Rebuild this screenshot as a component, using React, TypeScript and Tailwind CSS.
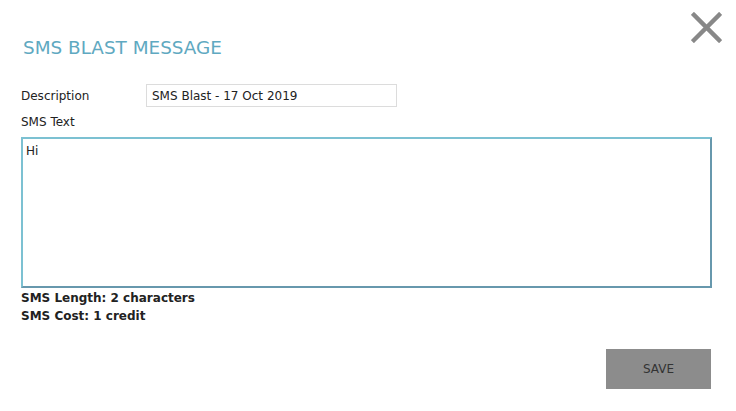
export default function App() {
  return (
    <div
      className="relative h-[411px] w-[736px] bg-white text-[12px] text-[#222]"
      style={{ fontFamily: '"DejaVu Sans", Verdana, sans-serif' }}
    >
      {/* close */}
      <button className="absolute right-[14px] top-[12px] h-[31px] w-[31px]" aria-label="Close">
        <svg viewBox="0 0 32 32" className="h-full w-full">
          <path d="M3 3 L29 29 M29 3 L3 29" stroke="#888" strokeWidth="4.5" strokeLinecap="square" />
        </svg>
      </button>

      <div className="flex flex-col px-[21px] pt-[38px]">
        <h1 className="pl-[2px] text-[18.4px] leading-[20px] text-[#5fa9c1]">SMS BLAST MESSAGE</h1>

        <div className="mt-[26px] flex items-center">
          <label className="w-[125px] leading-[22px]">Description</label>
          <div className="flex h-[23px] w-[251px] items-center border border-[#dcdcdc] px-[5px]">
            SMS Blast - 17 Oct 2019
          </div>
        </div>

        <div className="mt-[7px] leading-[16px]">SMS Text</div>

        <div className="mt-[7px] h-[151px] w-[691px] border-2 border-t-[#7cc1d2] border-l-[#7cc1d2] border-b-[#6798ad] border-r-[#6798ad] px-[3px] pt-[3px]">
          Hi
        </div>

        <div className="mt-[1px] font-bold leading-[18px]">SMS Length: 2 characters</div>
        <div className="font-bold leading-[18px]">SMS Cost: 1 credit</div>

        <div className="mt-[24px] flex justify-end pr-[4px]">
          <button className="h-[40px] w-[105px] bg-[#8c8c8c] text-[12px] text-[#333]">SAVE</button>
        </div>
      </div>
    </div>
  );
}
